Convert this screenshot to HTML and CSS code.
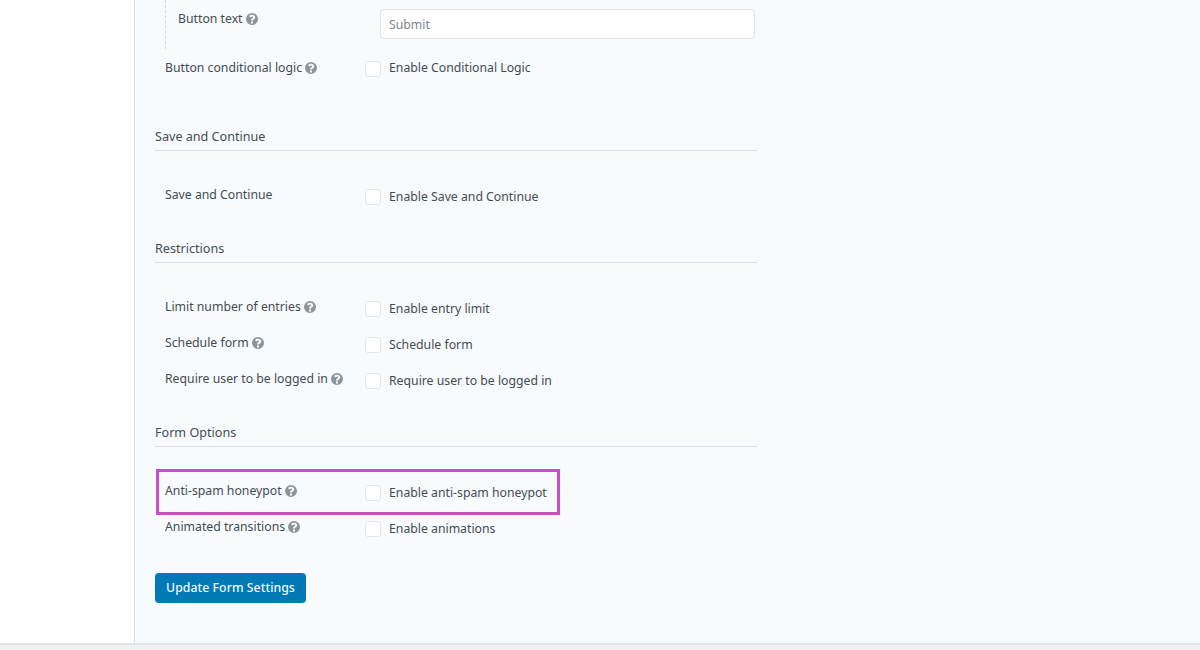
FILE: index.html
```html
<!DOCTYPE html>
<html lang="en">
<head>
<meta charset="utf-8">
<title>Form Settings</title>
<link rel="stylesheet" href="styles.css">
</head>
<body>
<div class="page">
  <aside class="side"></aside>
  <main class="main">
    <svg width="0" height="0" class="defs"><defs>
      <symbol id="q" viewBox="0 0 24 24"><path fill-rule="evenodd" d="M12 0a12 12 0 1 0 0 24a12 12 0 0 0 0-24zM10 17h4v4h-4zM12.2 3.500c3.600 0 6.300 2.200 6.300 5.200c0 2.100-1.100 3.200-2.700 4.200c-1.200.7-1.800 1.200-1.800 2.100h-4c0-2.400 1-3.500 2.600-4.500c1.100-.7 1.900-1.100 1.900-1.900c0-.8-.9-1.400-2-1.400c-1.200 0-2.100.6-3 1.800L6.100 6.400C7.600 4.500 9.500 3.500 12.200 3.500z"/></symbol>
    </defs></svg>

    <div class="sub">
      <div class="row sub-row">
        <div class="label">Button text <svg class="q"><use href="#q"/></svg></div>
        <div class="input">Submit</div>
      </div>
    </div>
    <div class="row r-logic">
      <div class="label">Button conditional logic <svg class="q"><use href="#q"/></svg></div>
      <label class="opt"><span class="box"></span>Enable Conditional Logic</label>
    </div>

    <h3 class="sec s1">Save and Continue</h3>
    <div class="row">
      <div class="label">Save and Continue</div>
      <label class="opt"><span class="box"></span>Enable Save and Continue</label>
    </div>

    <h3 class="sec s2">Restrictions</h3>
    <div class="row">
      <div class="label">Limit number of entries <svg class="q"><use href="#q"/></svg></div>
      <label class="opt"><span class="box"></span>Enable entry limit</label>
    </div>
    <div class="row">
      <div class="label">Schedule form <svg class="q"><use href="#q"/></svg></div>
      <label class="opt"><span class="box"></span>Schedule form</label>
    </div>
    <div class="row">
      <div class="label">Require user to be logged in <svg class="q"><use href="#q"/></svg></div>
      <label class="opt"><span class="box"></span>Require user to be logged in</label>
    </div>

    <h3 class="sec s2">Form Options</h3>
    <div class="row">
      <div class="label">Anti-spam honeypot <svg class="q"><use href="#q"/></svg></div>
      <label class="opt"><span class="box"></span>Enable anti-spam honeypot</label>
      <div class="mark"></div>
    </div>
    <div class="row">
      <div class="label">Animated transitions <svg class="q"><use href="#q"/></svg></div>
      <label class="opt"><span class="box"></span>Enable animations</label>
    </div>

    <button class="btn" type="button">Update Form Settings</button>
  </main>
</div>
<div class="foot"></div>
</body>
</html>
```
FILE: styles.css
```css
* { box-sizing: border-box; }
html, body { margin: 0; height: 650px; overflow: hidden; background: #f1f1f1; }
body { font-family: "Noto Sans", "Open Sans", sans-serif; font-size: 12.25px; color: #444b50; }
.page { display: flex; height: 643px; }
.side { width: 135px; background: #fff; border-right: 1px solid #dcdfe3; }
.main { flex: 1; background: #f7fbfe; padding-left: 20px; }
.defs { position: absolute; }
.foot { height: 7px; background: #f1f1f1; border-top: 2px solid #e2e3e5; }

.row { position: relative; display: flex; width: 602px; height: 36px; padding-left: 10px; }
.label { width: 200px; line-height: 16px; padding-top: 5px; white-space: nowrap; }
.opt { display: flex; align-items: flex-start; line-height: 16px; padding-top: 7px; }
.box { width: 16px; height: 16px; margin: 0 8px 0 0; background: #fff; border: 1px solid #e4e6ea; border-radius: 3px; }
.q { width: 12px; height: 12px; fill: #8f9498; vertical-align: -1.5px; }

.sub { margin-left: 10px; width: 592px; height: 49px; border-left: 1px dashed #d5d9dd; }
.sub-row { width: auto; height: 49px; padding-left: 12px; align-items: flex-start; }
.sub-row .label { width: 202px; padding-top: 11px; }
.input { width: 375px; height: 30px; margin-top: 9px; padding-left: 8px; line-height: 29px; color: #7e8488; background: #fff; border: 1px solid #e1e3e7; border-radius: 4px; }
.r-logic { margin-top: 5px; }
.r-logic .label { padding-top: 6px; }
.r-logic .opt { padding-top: 6px; }
.r-logic .box { margin-top: 1px; }

.sec { width: 602px; margin: 0 0 31px; height: 24px; line-height: 20px; font-size: 12.6px; font-weight: 400; color: #444b50; border-bottom: 1px solid #dcdfe3; }
.s1 { margin-top: 37px; }
.s2 { margin-top: 21px; }

.mark { position: absolute; left: 1px; top: -9px; width: 404px; height: 46px; border: 3px solid #c950c4; pointer-events: none; }
.btn { display: block; margin-top: 23px; width: 151px; height: 30px; padding: 0 0 1px; font: 500 12.25px "Noto Sans", "Open Sans", sans-serif; letter-spacing: .05px; color: #f2f8fb; background: #0079b5; border: 0; border-radius: 4px; }
```
